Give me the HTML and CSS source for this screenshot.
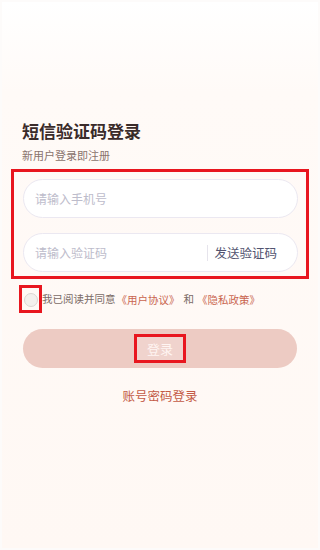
FILE: index.html
```html
<!DOCTYPE html>
<html lang="zh-CN">
<head>
  <meta charset="UTF-8">
  <title>短信验证码登录</title>
  <link rel="stylesheet" href="styles.css">
</head>
<body>

  <div class="page">
    <h1 class="titulo">短信验证码登录</h1>
    <p class="sub">新用户登录即注册</p>

    <div class="campos">
      <div class="campo">
        <input type="text" placeholder="请输入手机号">
      </div>
      <div class="campo">
        <input type="text" placeholder="请输入验证码">
        <span class="sep"></span>
        <span class="enviar">发送验证码</span>
      </div>
    </div>

    <div class="acordo">
      <span class="marca"><span class="bola"></span></span>
      <span>我已阅读并同意</span>
      <a class="link">《用户协议》</a>
      <span class="e">和</span>
      <a class="link">《隐私政策》</a>
    </div>

    <button class="entrar"><span class="entrar-txt">登录</span></button>

    <div class="outro">账号密码登录</div>
  </div>

</body>
</html>
```

FILE: styles.css
```css
body {
  margin: 0;
  font-family: "Noto Sans CJK SC", "Noto Sans", sans-serif;
  background-color: #ffffff;
}

.page {
  box-sizing: border-box;
  height: 550px;
  padding: 117px 21px 0;
  border: 2px solid #fdfbfa;
  background: linear-gradient(#ffffff 0px, #fffaf7 90px, #fff8f4 550px);
}

.titulo {
  margin: 0;
  margin-left: -1px;
  font-size: 17px;
  line-height: 24px;
  font-weight: 700;
  color: #3a2b2a;
}

.sub {
  margin: 4px 0 0;
  margin-left: -1px;
  font-size: 11px;
  line-height: 16px;
  color: #8a736d;
}

.campos {
  margin: 6px -12px 0 -12px;
  border: 3px solid #e8161f;
  padding: 7px 8px 4px 9px;
  display: flex;
  flex-direction: column;
  gap: 15px;
}

.campo {
  height: 39px;
  box-sizing: border-box;
  border: 1px solid #ebe8f1;
  border-radius: 20px;
  background-color: #ffffff;
  display: flex;
  align-items: center;
  padding: 0 14px 0 11px;
}

.campo input {
  flex: 1;
  min-width: 0;
  border: none;
  outline: none;
  background: transparent;
  font-family: inherit;
  font-size: 12px;
  color: #333;
  padding: 0;
}

.campo input::placeholder {
  color: #bdbccb;
}

.sep {
  width: 1px;
  height: 16px;
  background-color: #e6e4ec;
  margin-right: 6px;
}

.enviar {
  font-size: 12.5px;
  color: #525470;
  margin-right: 6px;
}

.acordo {
  margin-top: 6px;
  margin-left: -4px;
  display: flex;
  align-items: center;
  font-size: 10.5px;
  color: #7b6b66;
}

.marca {
  box-sizing: border-box;
  width: 23px;
  height: 28px;
  border: 3px solid #e8161f;
  display: flex;
  align-items: center;
  justify-content: center;
}

.bola {
  flex: none;
  width: 14px;
  height: 14px;
  box-sizing: border-box;
  border-radius: 50%;
  border: 1px solid #dcd6d2;
  background-color: #f3f0ed;
  margin-top: 2px;
}

.acordo span {
  line-height: 16px;
}

.link {
  color: #c9654f;
  margin: 0 2px 0 1px;
}

.acordo .e {
  margin: 0 2px;
}

.entrar {
  display: flex;
  align-items: center;
  justify-content: center;
  width: 100%;
  height: 39px;
  margin-top: 16px;
  border: none;
  border-radius: 20px;
  background-color: #edcbc3;
  padding: 0;
  cursor: pointer;
}

.entrar-txt {
  box-sizing: border-box;
  width: 52px;
  height: 29px;
  border: 3px solid #e8161f;
  display: flex;
  align-items: center;
  justify-content: center;
  font-family: "Noto Sans CJK SC", sans-serif;
  font-size: 13px;
  color: #fff5f2;
  background-color: #f0d3cd;
}

.outro {
  margin-top: 19px;
  text-align: center;
  font-size: 12.5px;
  line-height: 18px;
  color: #c35a46;
}
```
